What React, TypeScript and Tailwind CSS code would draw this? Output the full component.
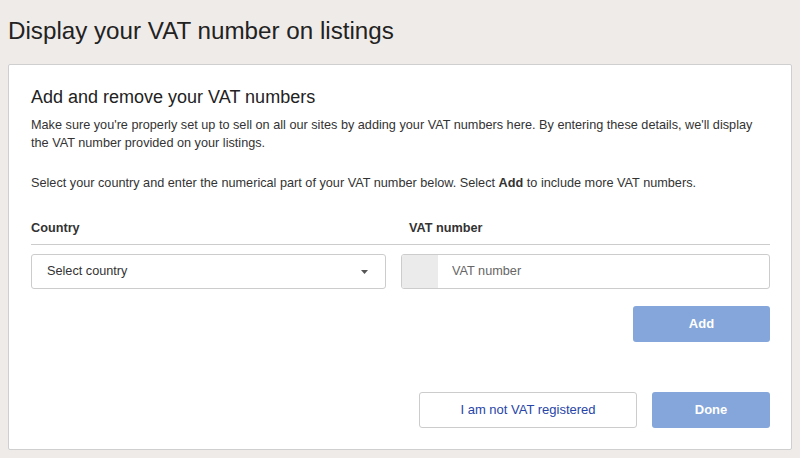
import React from 'react';

const App: React.FC = () => {
  return (
    <div className="min-h-[458px] bg-[#efebe8] pt-[17px] pb-2 text-[#333] font-['Liberation_Sans',Arial,sans-serif]">
      <h1 className="px-2 text-[24.2px] leading-[28px] font-normal text-[#222] mb-[19px]">
        Display your VAT number on listings
      </h1>

      <div className="mx-2 bg-white border border-[#cfcfcf] rounded-[2px] pl-[22px] pr-[21px] pt-[20px] pb-[21px]">
        <h2 className="text-[18px] leading-[24px] font-normal text-[#222]">Add and remove your VAT numbers</h2>
        <p className="mt-[7px] text-[12.7px] leading-[18px]">
          Make sure you're properly set up to sell on all our sites by adding your VAT numbers here. By entering these details, we'll display the VAT number provided on your listings.
        </p>
        <p className="mt-[22px] text-[12.7px] leading-[18px]">
          Select your country and enter the numerical part of your VAT number below. Select <span className="font-bold">Add</span> to include more VAT numbers.
        </p>

        <div className="mt-[27px] grid grid-cols-[355px_1fr] gap-x-[15px] border-b border-[#cccccc] pb-[7px] text-[12.7px] leading-[18px] font-bold">
          <span>Country</span>
          <span className="pl-2">VAT number</span>
        </div>

        <div className="mt-[9px] grid grid-cols-[355px_1fr] gap-x-[15px]">
          <button className="h-[35px] flex items-center justify-between border border-[#cccccc] rounded-[3px] pl-[15px] pr-[15px] text-[12.7px] text-[#333] bg-white">
            <span>Select country</span>
            <svg width="7" height="4" viewBox="0 0 7 4" className="mr-[2px]">
              <path d="M0 0h7L3.5 4z" fill="#555" />
            </svg>
          </button>
          <div className="h-[35px] flex border border-[#cccccc] rounded-[3px] overflow-hidden">
            <div className="w-[36px] bg-[#ebebeb]" />
            <input
              placeholder="VAT number"
              className="flex-1 pl-[14px] text-[12.7px] text-[#333] placeholder:text-[#666] outline-none"
            />
          </div>
        </div>

        <div className="mt-[17px] flex justify-end">
          <button className="w-[137px] h-[36px] rounded-[3px] bg-[#85a6da] text-white text-[13px] font-bold">
            Add
          </button>
        </div>

        <div className="mt-[50px] flex justify-end gap-[15px]">
          <button className="w-[218px] h-[36px] rounded-[3px] border border-[#cccccc] bg-white text-[#2745a8] text-[13px]">
            I am not VAT registered
          </button>
          <button className="w-[118px] h-[36px] rounded-[3px] bg-[#85a6da] text-white text-[13px] font-bold">
            Done
          </button>
        </div>
      </div>
    </div>
  );
};

export default App;
